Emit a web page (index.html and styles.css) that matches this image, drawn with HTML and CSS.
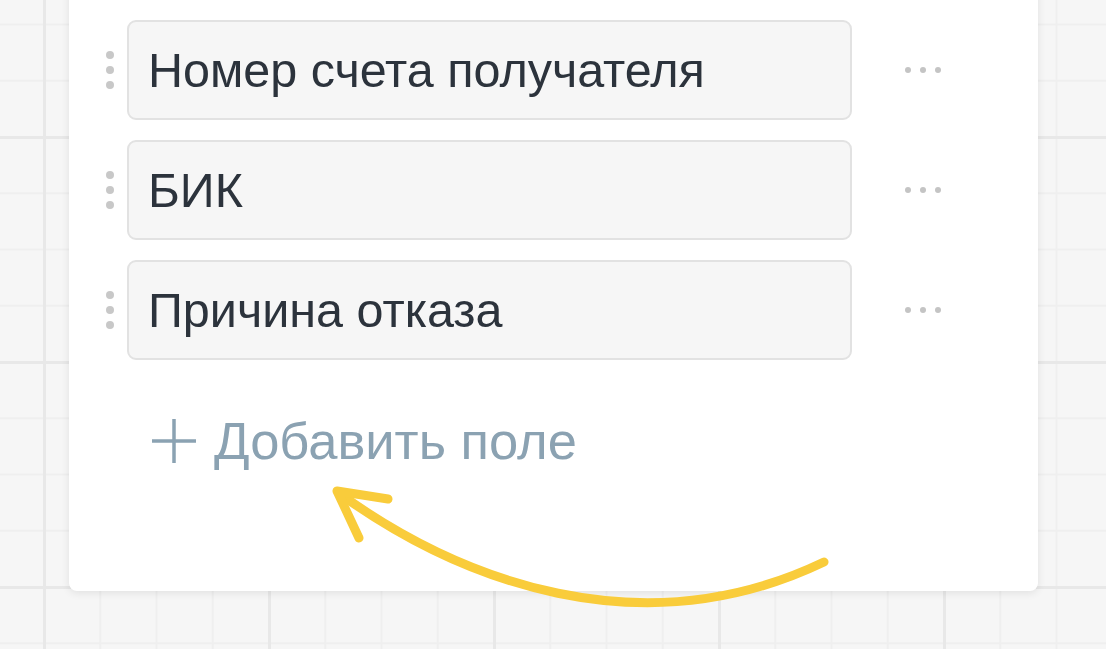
FILE: index.html
```html
<!DOCTYPE html>
<html>
  <head>
    <title>Поля формы</title>
    <link rel="stylesheet" href="styles.css">
  </head>
  <body>
    <div class="card">
      <div class="fields">
        <div class="field-row">
          <span class="handle"><i></i><i></i><i></i></span>
          <div class="field"></div>
          <span class="more"><i></i><i></i><i></i></span>
        </div>
        <div class="field-row">
          <span class="handle"><i></i><i></i><i></i></span>
          <div class="field">Номер счета получателя</div>
          <span class="more"><i></i><i></i><i></i></span>
        </div>
        <div class="field-row">
          <span class="handle"><i></i><i></i><i></i></span>
          <div class="field">БИК</div>
          <span class="more"><i></i><i></i><i></i></span>
        </div>
        <div class="field-row">
          <span class="handle"><i></i><i></i><i></i></span>
          <div class="field">Причина отказа</div>
          <span class="more"><i></i><i></i><i></i></span>
        </div>
      </div>
      <button class="add-field">
        <svg class="plus" width="44" height="44" viewBox="0 0 44 44">
          <path d="M22 0v44M0 22h44" stroke="currentColor" stroke-width="3.5" fill="none"/>
        </svg>
        Добавить поле
      </button>
    </div>

    <!-- hand-drawn hint arrow -->
    <svg class="hint-arrow" width="1106" height="649" viewBox="0 0 1106 649">
      <g fill="none" stroke="#f9cc3b" stroke-width="9" stroke-linecap="round" stroke-linejoin="round">
        <path d="M340 494 C 460 580 640 650 824 562"/>
        <path d="M388 499 L 337 491 L 359 538"/>
      </g>
    </svg>
  </body>
</html>
```

FILE: styles.css
```css
body {
  margin: 0;
  height: 649px;
  overflow: hidden;
  font-family: "Liberation Sans", Arial, sans-serif;
  background-color: #f6f6f6;
  /* canvas grid: big cells every 4 small ones */
  background-image:
    linear-gradient(to right, #e8e8e8 3px, transparent 3px),
    linear-gradient(to bottom, #e8e8e8 3px, transparent 3px),
    linear-gradient(to right, #efefef 2px, transparent 2px),
    linear-gradient(to bottom, #efefef 2px, transparent 2px);
  background-size: 225px 100%, 100% 225px, 56.25px 100%, 100% 56.25px;
  background-position: 43px 0, 0 136px, 43px 0, 0 136px;
  position: relative;
}
.card {
  margin: -120px 0 0 69px;
  width: 969px;
  padding: 20px 0 120px 37px;
  box-sizing: border-box;
  background: #fff;
  border-radius: 8px;
  box-shadow: 0 2px 8px rgba(0, 0, 0, 0.09);
}
.fields {
  display: flex;
  flex-direction: column;
  gap: 20px;
}
.field-row {
  display: flex;
  align-items: center;
}
.handle {
  display: flex;
  flex-direction: column;
  gap: 7px;
  width: 8px;
  margin-right: 13px;
}
.handle i {
  width: 8px;
  height: 8px;
  border-radius: 50%;
  background: #c8c8c8;
}
.field {
  width: 725px;
  height: 100px;
  box-sizing: border-box;
  display: flex;
  align-items: center;
  padding-left: 19px;
  border: 2px solid #e2e2e2;
  border-radius: 9px;
  background: #f6f6f6;
  color: #2c333c;
  font-size: 48.5px;
}
.more {
  display: flex;
  gap: 9px;
  margin-left: 53px;
}
.more i {
  width: 6px;
  height: 6px;
  border-radius: 50%;
  background: #c4c4c4;
}
.add-field {
  display: flex;
  align-items: center;
  gap: 18px;
  margin: 50px 0 0 46px;
  padding: 0;
  border: none;
  background: none;
  font-family: inherit;
  font-size: 52.5px;
  color: #8ba2b2;
  cursor: pointer;
}
.plus {
  color: #8ba2b2;
}
.hint-arrow {
  position: absolute;
  top: 0;
  left: 0;
  pointer-events: none;
}
```
